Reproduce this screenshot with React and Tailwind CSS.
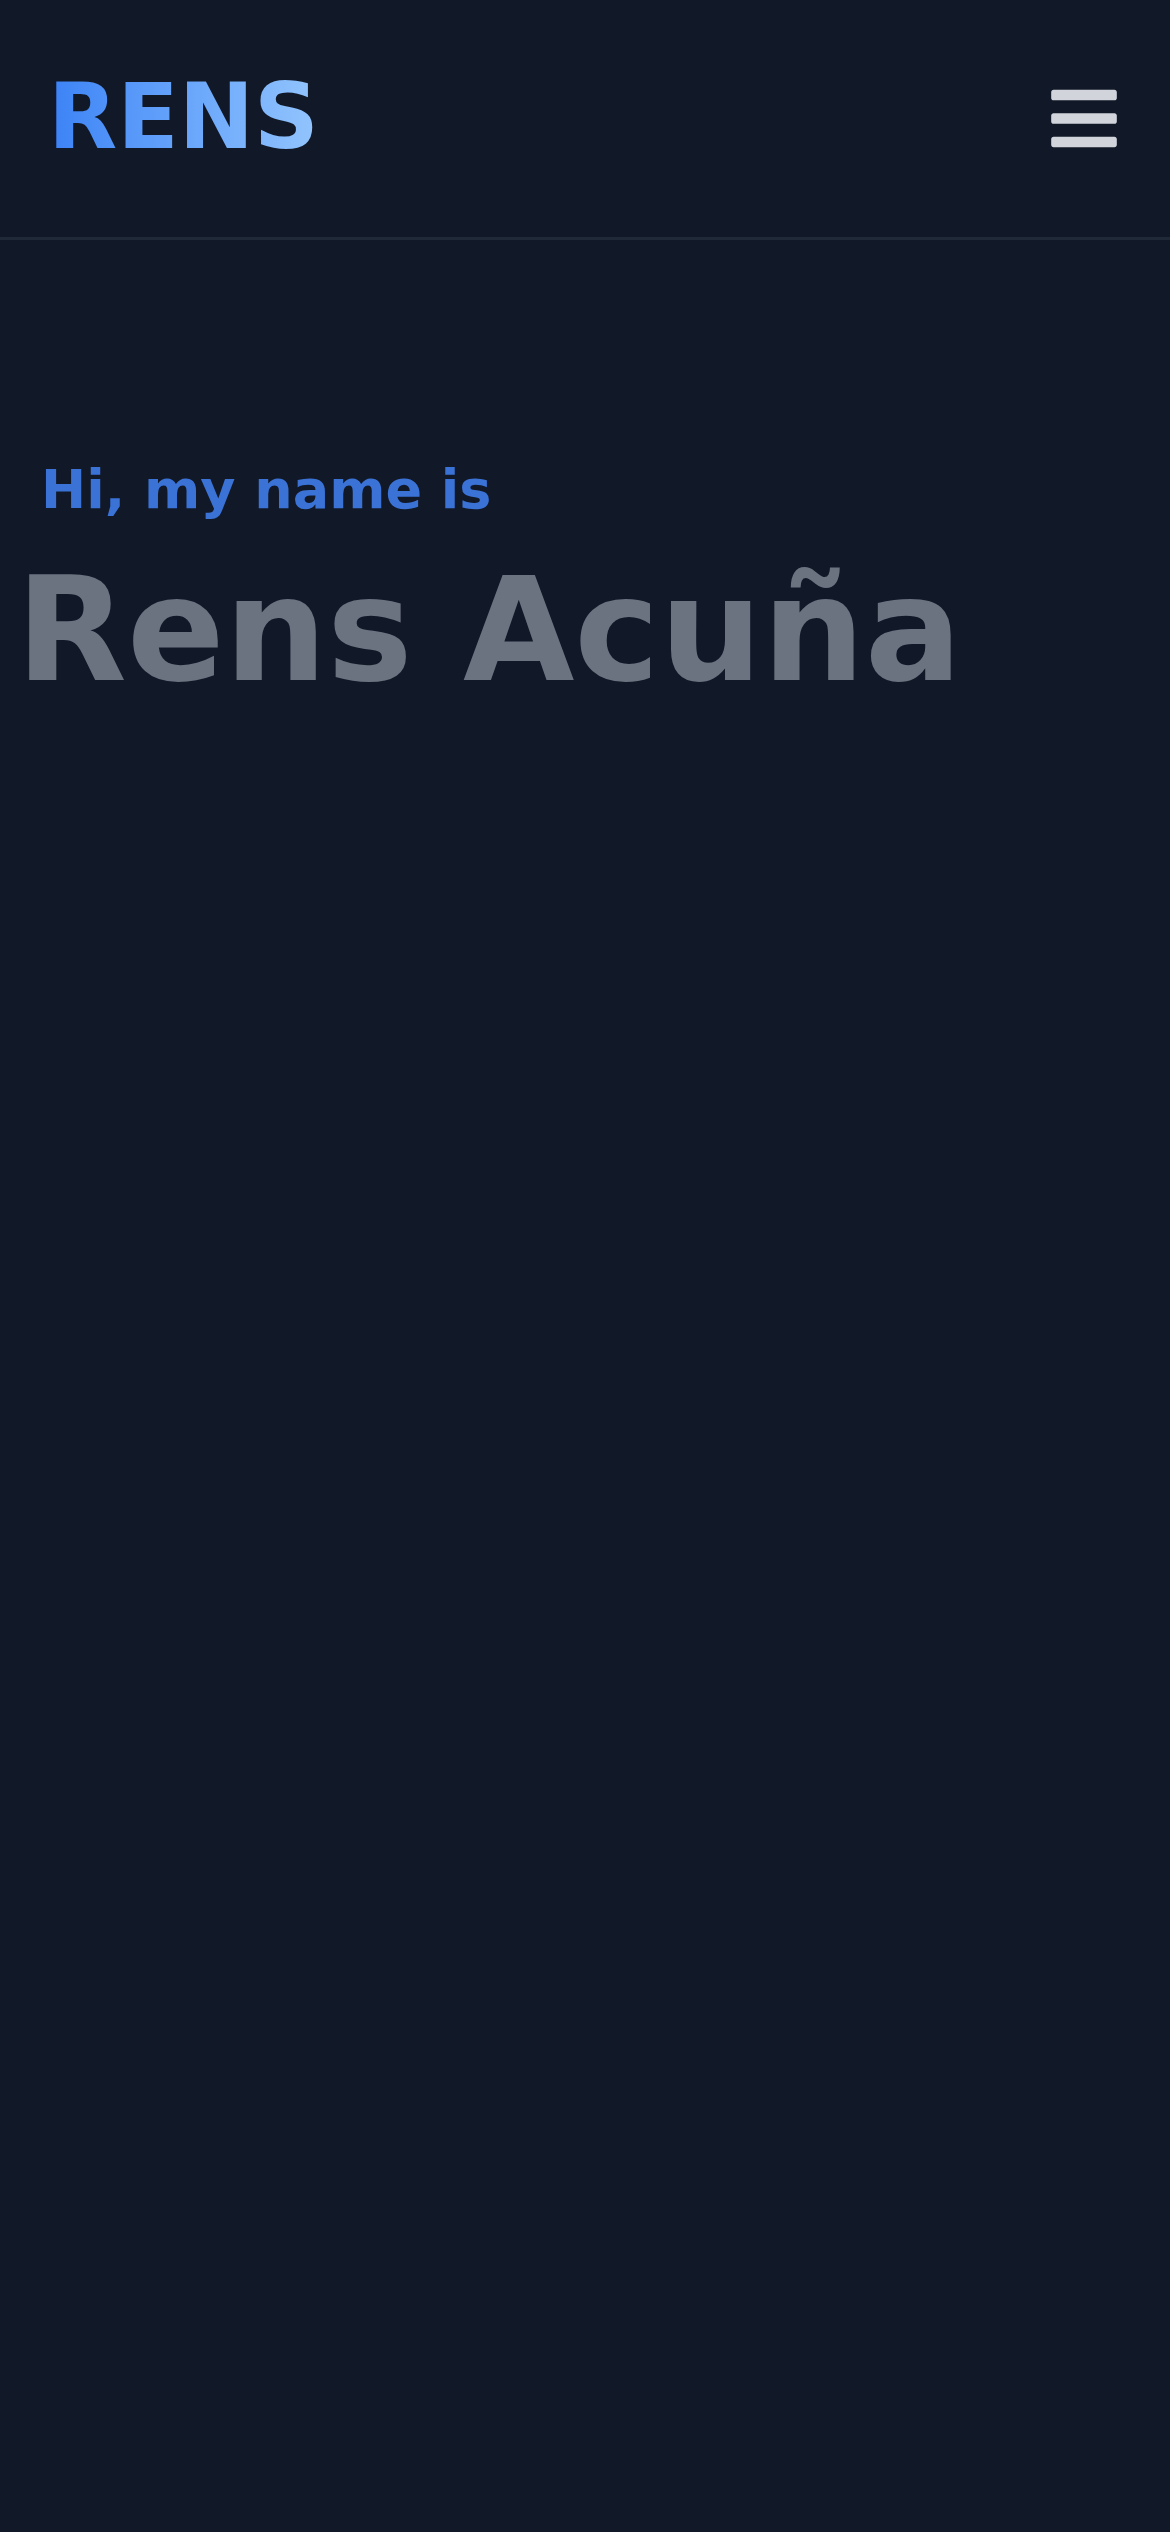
import React from "react";

const MenuIcon = () => (
  <svg viewBox="0 0 448 512" className="w-[66px] h-[75px] fill-[#d1d5db]">
    <path d="M16 132h416c8.837 0 16-7.163 16-16V76c0-8.837-7.163-16-16-16H16C7.163 60 0 67.163 0 76v40c0 8.837 7.163 16 16 16zm0 160h416c8.837 0 16-7.163 16-16v-40c0-8.837-7.163-16-16-16H16c-8.837 0-16 7.163-16 16v40c0 8.837 7.163 16 16 16zm0 160h416c8.837 0 16-7.163 16-16v-40c0-8.837-7.163-16-16-16H16c-8.837 0-16 7.163-16 16v40c0 8.837 7.163 16 16 16z" />
  </svg>
);

const App = () => {
  return (
    <div className="min-h-[2532px] bg-[#111827] font-['DejaVu_Sans',sans-serif]">
      <header className="h-[240px] flex items-center justify-between pl-[48px] pr-[53px] border-b-[3px] border-[#1f2937]">
        <h1 className="mb-[3px] text-[90px] leading-[108px] font-bold bg-linear-to-r from-[#3b82f6] to-[#93c5fd] bg-clip-text text-transparent">
          RENS
        </h1>
        <button>
          <MenuIcon />
        </button>
      </header>

      <section className="pt-[208px]">
        <p className="pl-[41px] text-[54px] leading-[84px] font-bold text-[#3a72d6]">
          Hi, my name is
        </p>
        <h2 className="mt-[26px] pl-[16px] text-[144px] leading-[144px] font-bold text-[#6b7280]">
          Rens Acuña
        </h2>
      </section>
    </div>
  );
};

export default App;
